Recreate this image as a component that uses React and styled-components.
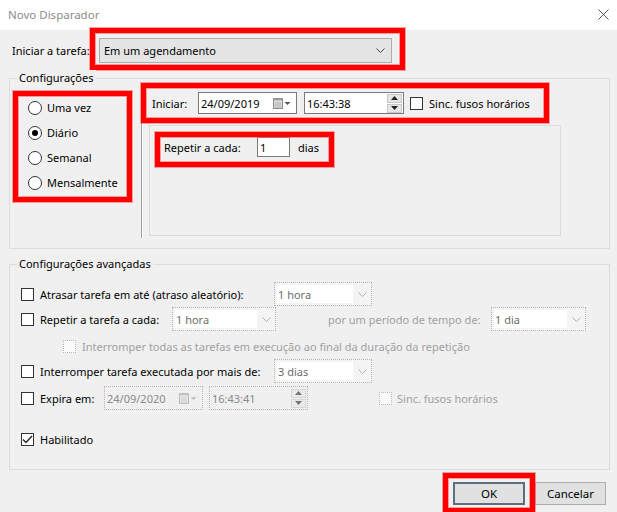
import React from "react";
import styled, { createGlobalStyle } from "styled-components";

const GlobalStyle = createGlobalStyle`
  *, *::before, *::after { box-sizing: border-box; }
  html, body { margin: 0; padding: 0; background: #f0f0f0; }
  body {
    font-family: "Noto Sans", "Open Sans", sans-serif;
    font-size: 11px;
    color: #000;
  }
`;

const Window = styled.div`
  width: 617px;
  height: 512px;
  display: flex;
  flex-direction: column;
  background: #f0f0f0;
  overflow: hidden;
`;

const TitleBar = styled.div`
  height: 30px;
  flex: none;
  background: #fff;
  display: flex;
  align-items: center;
  justify-content: space-between;
  padding: 0 8px 2px 8px;
`;

const Title = styled.span`
  color: #8c8c8c;
  font-size: 11.5px;
`;

const Body = styled.div`
  display: flex;
  flex-direction: column;
  padding: 0 7px 0 9px;
`;

const Highlight = styled.div`
  position: relative;
  display: flex;
  flex: none;
  width: fit-content;
  align-self: flex-start;
  &::after {
    content: "";
    position: absolute;
    top: ${(p) => p.$t}px;
    right: ${(p) => p.$r}px;
    bottom: ${(p) => p.$b}px;
    left: ${(p) => p.$l}px;
    border: 5px solid #ff0000;
    box-shadow: 0 0 0 1px rgba(255, 90, 90, 0.55), inset 0 0 0 1px rgba(255, 90, 90, 0.55);
    pointer-events: none;
  }
`;

const TaskRow = styled.div`
  display: flex;
  align-items: center;
  margin-top: 8px;
  padding-left: 3px;
  height: 25px;
`;

const FieldLabel = styled.span`
  flex: none;
  width: ${(p) => (p.$w ? `${p.$w}px` : "auto")};
  color: ${(p) => (p.$disabled ? "#a0a0a0" : "#000")};
  margin-left: ${(p) => p.$ml || 0}px;
  white-space: nowrap;
`;

const Combo = styled.div`
  width: ${(p) => p.$w}px;
  height: 25px;
  border: 1px solid #adadad;
  background: #e5e5e5;
  display: flex;
  align-items: center;
  justify-content: space-between;
  padding: 0 6px 0 4px;
`;

const DisabledCombo = styled.div`
  flex: none;
  width: ${(p) => p.$w}px;
  height: 24px;
  margin-left: ${(p) => p.$ml || 0}px;
  border: 1px dotted #b4b4b4;
  background: #f4f4f4;
  display: flex;
  align-items: stretch;
  padding: 2px 0 2px 2px;
`;

const ComboText = styled.div`
  flex: 1;
  background: #fff;
  color: #6d6d6d;
  display: flex;
  align-items: center;
  padding-left: 1px;
`;

const ComboArrow = styled.div`
  width: 18px;
  flex: none;
  display: flex;
  align-items: center;
  justify-content: center;
`;

const Group = styled.div`
  position: relative;
  margin-top: ${(p) => p.$mt}px;
  height: ${(p) => p.$h}px;
  border: 1px solid #dcdcdc;
  flex: none;
`;

const GroupTitle = styled.span`
  position: absolute;
  top: -9px;
  left: 7px;
  padding: 0 2px;
  line-height: 16px;
  background: #f0f0f0;
`;

const ScheduleLayout = styled.div`
  display: flex;
  height: 100%;
`;

const RadioColumn = styled.div`
  width: 131px;
  flex: none;
  display: flex;
  flex-direction: column;
  padding: 16px 0 0 18px;
`;

const RadioList = styled.div`
  width: 96px;
  display: flex;
  flex-direction: column;
`;

const RadioItem = styled.label`
  height: 25px;
  display: flex;
  align-items: center;
`;

const RadioMark = styled.span`
  width: 14px;
  height: 14px;
  border-radius: 50%;
  border: 1px solid #333;
  background: #fff;
  margin-right: 5px;
  display: flex;
  align-items: center;
  justify-content: center;
  flex: none;
  &::after {
    content: "";
    width: 6px;
    height: 6px;
    border-radius: 50%;
    background: ${(p) => (p.$checked ? "#000" : "transparent")};
  }
`;

const Separator = styled.div`
  width: 2px;
  flex: none;
  margin: 4px 0 10px 0;
  border-left: 1px solid #a0a0a0;
  border-right: 1px solid #fff;
`;

const ScheduleDetail = styled.div`
  display: flex;
  flex-direction: column;
  padding-top: 13px;
`;

const StartRow = styled.div`
  display: flex;
  align-items: center;
  height: 22px;
  width: 386px;
`;

const InputBox = styled.div`
  flex: none;
  width: ${(p) => p.$w}px;
  height: ${(p) => p.$h || 22}px;
  margin-left: ${(p) => p.$ml || 0}px;
  border: ${(p) => (p.$disabled ? "1px dotted #b4b4b4" : "1px solid #7a7a7a")};
  background: ${(p) => (p.$disabled ? "#f0f0f0" : "#fff")};
  color: ${(p) => (p.$disabled ? "#8a8a8a" : "#000")};
  display: flex;
  align-items: center;
  justify-content: space-between;
  padding: 0 1px 0 2px;
`;

const SpinStack = styled.div`
  display: flex;
  flex-direction: column;
  gap: 1px;
  opacity: ${(p) => (p.$disabled ? 0.6 : 1)};
`;

const SpinButton = styled.div`
  width: 15px;
  height: 9px;
  background: #e6e6e6;
  border: 1px solid #c8c8c8;
  display: flex;
  align-items: center;
  justify-content: center;
`;

const CheckMark = styled.span`
  flex: none;
  width: 13px;
  height: 13px;
  margin-left: ${(p) => p.$ml || 0}px;
  margin-right: ${(p) => (p.$mr === undefined ? 6 : p.$mr)}px;
  border: ${(p) => (p.$disabled ? "1px dotted #b8b8b8" : "1px solid #333")};
  background: ${(p) => (p.$disabled ? "#fafafa" : "#fff")};
  display: flex;
  align-items: center;
  justify-content: center;
`;

const RecurrencePanel = styled.div`
  margin: 11px 0 0 6px;
  width: 412px;
  height: 111px;
  border: 1px solid #dcdcdc;
  padding: 11px 0 0 14px;
  display: flex;
  flex-direction: column;
`;

const RepeatRow = styled.div`
  width: 160px;
  height: 20px;
  display: flex;
  align-items: center;
`;

const AdvancedList = styled.div`
  display: flex;
  flex-direction: column;
  padding: 17px 0 0 11px;
`;

const AdvRow = styled.div`
  display: flex;
  align-items: center;
  height: 24px;
  margin-top: ${(p) => p.$mt || 0}px;
  padding-left: ${(p) => p.$pl || 0}px;
`;

const ButtonRow = styled.div`
  display: flex;
  justify-content: flex-end;
  gap: 10px;
  margin-top: 12px;
  padding-right: 4px;
`;

const Button = styled.button`
  width: ${(p) => p.$w}px;
  height: 23px;
  font-family: inherit;
  font-size: 11.5px;
  color: #000;
  background: #e1e1e1;
  border: ${(p) => (p.$primary ? "2px solid #5e6e7e" : "1px solid #adadad")};
  padding: 0;
`;

const Chevron = ({ color = "#444" }) => (
  <svg width="9" height="5" viewBox="0 0 9 5">
    <polyline points="0.5,0.5 4.5,4.5 8.5,0.5" fill="none" stroke={color} strokeWidth="1" />
  </svg>
);

const CloseIcon = () => (
  <svg width="11" height="11" viewBox="0 0 11 11">
    <path d="M0.5 0.5 L10.5 10.5 M10.5 0.5 L0.5 10.5" stroke="#555" strokeWidth="1" />
  </svg>
);

const CalendarIcon = ({ faded }) => (
  <svg width="18" height="11" viewBox="0 0 18 11" style={{ opacity: faded ? 0.5 : 1, marginRight: 4 }}>
    <rect x="0.5" y="0.5" width="9" height="10" fill="#f4f4f4" stroke="#8a8a8a" />
    <rect x="0.5" y="0.5" width="9" height="2" fill="#9a9a9a" />
    <path d="M3 3v7M5 3v7M7 3v7M1 5h8M1 7h8M1 9h8" stroke="#b0b0b0" strokeWidth="0.8" />
    <polygon points="11.5,4 17.5,4 14.5,7" fill={faded ? "#999" : "#555"} />
  </svg>
);

const Tri = ({ up }) => (
  <svg width="7" height="4" viewBox="0 0 7 4">
    <polygon points={up ? "0,4 7,4 3.5,0" : "0,0 7,0 3.5,4"} fill="#222" />
  </svg>
);

const Tick = () => (
  <svg width="11" height="9" viewBox="0 0 11 9">
    <polyline points="1,4.5 4,7.5 10,1" fill="none" stroke="#222" strokeWidth="1.3" />
  </svg>
);

const DateField = ({ value, disabled, ml }) => (
  <InputBox $w={99} $h={disabled ? 24 : 22} $disabled={disabled} $ml={ml}>
    <span>{value}</span>
    <CalendarIcon faded={disabled} />
  </InputBox>
);

const TimeField = ({ value, disabled, ml, w = 100 }) => (
  <InputBox $w={w} $h={disabled ? 24 : 22} $disabled={disabled} $ml={ml}>
    <span>{value}</span>
    <SpinStack $disabled={disabled}>
      <SpinButton><Tri up /></SpinButton>
      <SpinButton><Tri /></SpinButton>
    </SpinStack>
  </InputBox>
);

const Select = ({ value, w, ml }) => (
  <DisabledCombo $w={w} $ml={ml}>
    <ComboText>{value}</ComboText>
    <ComboArrow><Chevron color="#b0b0b0" /></ComboArrow>
  </DisabledCombo>
);

const radios = [
  { label: "Uma vez", checked: false },
  { label: "Diário", checked: true },
  { label: "Semanal", checked: false },
  { label: "Mensalmente", checked: false },
];

export default function App() {
  return (
    <>
      <GlobalStyle />
      <Window>
        <TitleBar>
          <Title>Novo Disparador</Title>
          <CloseIcon />
        </TitleBar>
        <Body>
          <TaskRow>
            <FieldLabel $w={87}>Iniciar a tarefa:</FieldLabel>
            <Highlight $t={-10} $r={-13} $b={-7} $l={-9}>
              <Combo $w={293}>
                <span>Em um agendamento</span>
                <Chevron />
              </Combo>
            </Highlight>
          </TaskRow>

          <Group $mt={15} $h={171}>
            <GroupTitle>Configurações</GroupTitle>
            <ScheduleLayout>
              <RadioColumn>
                <Highlight $t={-4} $r={-8} $b={-7} $l={-15}>
                  <RadioList>
                    {radios.map((r) => (
                      <RadioItem key={r.label}>
                        <RadioMark $checked={r.checked} />
                        {r.label}
                      </RadioItem>
                    ))}
                  </RadioList>
                </Highlight>
              </RadioColumn>
              <Separator />
              <ScheduleDetail>
                <Highlight $t={-9} $r={-11} $b={-9} $l={-11} style={{ marginLeft: 9 }}>
                  <StartRow>
                    <FieldLabel $w={46}>Iniciar:</FieldLabel>
                    <DateField value="24/09/2019" />
                    <TimeField value="16:43:38" ml={7} />
                    <CheckMark $ml={6} />
                    <FieldLabel>Sinc. fusos horários</FieldLabel>
                  </StartRow>
                </Highlight>
                <RecurrencePanel>
                  <Highlight $t={-5} $r={-10} $b={-10} $l={-9}>
                    <RepeatRow>
                      <FieldLabel $w={93}>Repetir a cada:</FieldLabel>
                      <InputBox $w={33} $h={20}>1</InputBox>
                      <FieldLabel $ml={8}>dias</FieldLabel>
                    </RepeatRow>
                  </Highlight>
                </RecurrencePanel>
              </ScheduleDetail>
            </ScheduleLayout>
          </Group>

          <Group $mt={15} $h={206}>
            <GroupTitle>Configurações avançadas</GroupTitle>
            <AdvancedList>
              <AdvRow>
                <CheckMark />
                <FieldLabel $w={234}>Atrasar tarefa em até (atraso aleatório):</FieldLabel>
                <Select value="1 hora" w={98} />
              </AdvRow>
              <AdvRow $mt={1}>
                <CheckMark />
                <FieldLabel $w={132}>Repetir a tarefa a cada:</FieldLabel>
                <Select value="1 hora" w={104} />
                <FieldLabel $w={163} $ml={52} $disabled>por um período de tempo de:</FieldLabel>
                <Select value="1 dia" w={95} />
              </AdvRow>
              <AdvRow $mt={3} $pl={42}>
                <CheckMark $disabled />
                <FieldLabel $disabled>
                  Interromper todas as tarefas em execução ao final da duração da repetição
                </FieldLabel>
              </AdvRow>
              <AdvRow $mt={1}>
                <CheckMark />
                <FieldLabel $w={234}>Interromper tarefa executada por mais de:</FieldLabel>
                <Select value="3 dias" w={98} />
              </AdvRow>
              <AdvRow $mt={3}>
                <CheckMark />
                <FieldLabel $w={64}>Expira em:</FieldLabel>
                <DateField value="24/09/2020" disabled />
                <TimeField value="16:43:41" disabled ml={6} w={99} />
                <CheckMark $disabled $ml={71} $mr={5} />
                <FieldLabel $disabled>Sinc. fusos horários</FieldLabel>
              </AdvRow>
              <AdvRow $mt={17}>
                <CheckMark>
                  <Tick />
                </CheckMark>
                <FieldLabel>Habilitado</FieldLabel>
              </AdvRow>
            </AdvancedList>
          </Group>

          <ButtonRow>
            <Highlight $t={-9} $r={-10} $b={-8} $l={-10}>
              <Button $w={72} $primary>OK</Button>
            </Highlight>
            <Button $w={71}>Cancelar</Button>
          </ButtonRow>
        </Body>
      </Window>
    </>
  );
}
